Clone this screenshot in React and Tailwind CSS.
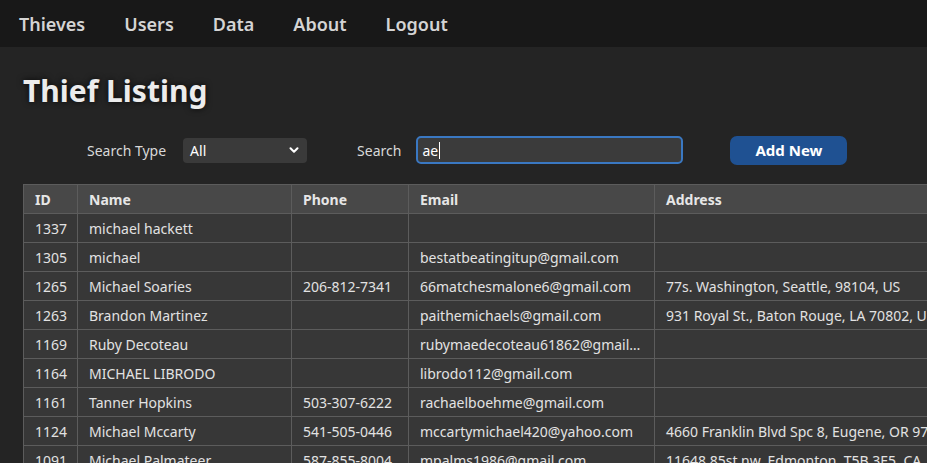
import { ChevronDown } from 'lucide-react';

const rows = [
    { id: 1337, name: 'michael hackett', phone: '', email: '', address: '' },
    { id: 1305, name: 'michael', phone: '', email: 'bestatbeatingitup@gmail.com', address: '' },
    { id: 1265, name: 'Michael Soaries', phone: '206-812-7341', email: '66matchesmalone6@gmail.com', address: '77s. Washington, Seattle, 98104, US' },
    { id: 1263, name: 'Brandon Martinez', phone: '', email: 'paithemichaels@gmail.com', address: '931 Royal St., Baton Rouge, LA 70802, US' },
    { id: 1169, name: 'Ruby Decoteau', phone: '', email: 'rubymaedecoteau61862@gmail.com', address: '' },
    { id: 1164, name: 'MICHAEL LIBRODO', phone: '', email: 'librodo112@gmail.com', address: '' },
    { id: 1161, name: 'Tanner Hopkins', phone: '503-307-6222', email: 'rachaelboehme@gmail.com', address: '' },
    { id: 1124, name: 'Michael Mccarty', phone: '541-505-0446', email: 'mccartymichael420@yahoo.com', address: '4660 Franklin Blvd Spc 8, Eugene, OR 97403' },
    { id: 1091, name: 'Michael Palmateer', phone: '587-855-8004', email: 'mpalms1986@gmail.com', address: '11648 85st nw, Edmonton, T5B 3E5, CA' },
];

const navItems = ['Thieves', 'Users', 'Data', 'About', 'Logout'];

function NavBar() {
    return (
        <nav className="h-[47px] bg-[#181818] flex items-center pl-[19px] gap-[39px]">
            {navItems.map(item => (
                <a key={item} className="text-[18px] font-semibold text-[#d4d4d4] cursor-pointer pt-px">{item}</a>
            ))}
        </nav>
    );
}

function SearchBar() {
    return (
        <div className="flex items-center pl-[87px] mt-[26px] h-[28px]">
            <span className="text-[14px] text-[#d8d8d8]">Search Type</span>
            <div className="ml-[17px] w-[124px] h-[25px] rounded-[4px] bg-[#3a3a3a] flex items-center justify-between pl-[7px] pr-[6px]">
                <span className="text-[14px] text-white">All</span>
                <ChevronDown size={14} strokeWidth={3.5} className="text-white" />
            </div>
            <span className="ml-[50px] text-[14px] text-[#d8d8d8]">Search</span>
            <div className="ml-[15px] w-[267px] h-[28px] rounded-[5px] border-2 border-[#3a78c2] bg-[#3b3b3b] flex items-center pl-[4px]">
                <span className="text-[14px] text-white">ae</span>
                <span className="w-px h-[17px] bg-white ml-px" />
            </div>
            <button className="ml-[47px] w-[117px] h-[29px] rounded-[7px] bg-[#1f5192] text-white text-[15px] font-bold">
                Add New
            </button>
        </div>
    );
}

function ThiefTable() {
    const cell = 'border border-[#5c5c5c] px-[11px] h-[29px] whitespace-nowrap';
    return (
        <table className="mt-[20px] ml-[23px] border-collapse table-fixed w-[1100px] text-[14px] text-[#e2e2e2]">
            <colgroup>
                <col className="w-[54px]" />
                <col className="w-[214px]" />
                <col className="w-[117px]" />
                <col className="w-[246px]" />
                <col />
            </colgroup>
            <thead>
                <tr className="bg-[#484848] text-left">
                    {['ID', 'Name', 'Phone', 'Email', 'Address'].map(h => (
                        <th key={h} className={`${cell} font-bold text-[#e6e6e6]`}>{h}</th>
                    ))}
                </tr>
            </thead>
            <tbody>
                {rows.map(r => (
                    <tr key={r.id} className="bg-[#373737]">
                        <td className={cell}>{r.id}</td>
                        <td className={cell}>{r.name}</td>
                        <td className={cell}>{r.phone}</td>
                        <td className={`${cell} overflow-hidden text-ellipsis max-w-0`}>{r.email}</td>
                        <td className={`${cell} overflow-hidden`}>{r.address}</td>
                    </tr>
                ))}
            </tbody>
        </table>
    );
}

export default function App() {
    return (
        <div className="w-[927px] h-[463px] overflow-hidden bg-[#242424] font-['Segoe_UI','Noto_Sans',sans-serif]">
            <NavBar />
            <h1 className="mt-[25px] ml-[23px] text-[30px] leading-[38px] font-bold text-[#ececec] [text-shadow:0_0_6px_rgba(0,0,0,0.8)]">
                Thief Listing
            </h1>
            <SearchBar />
            <ThiefTable />
        </div>
    );
}
